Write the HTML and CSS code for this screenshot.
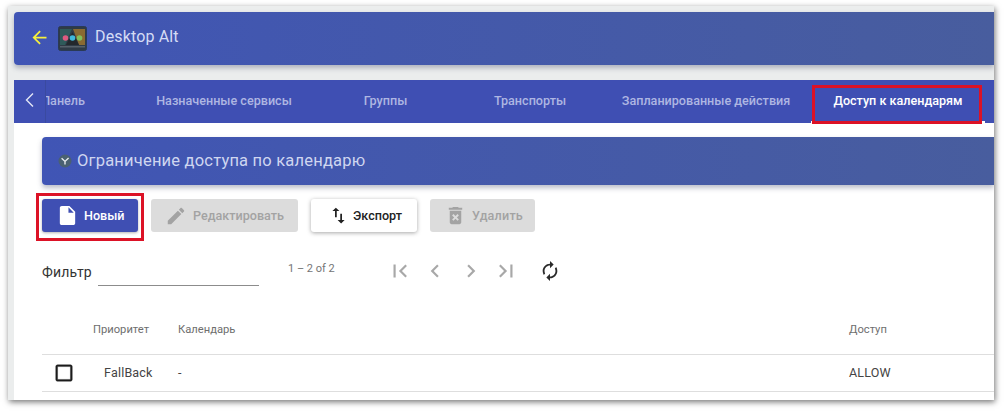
FILE: index.html
```html
<!DOCTYPE html>
<html lang="ru">
<head>
<meta charset="utf-8">
<title>Desktop Alt</title>
<link rel="stylesheet" href="styles.css">
</head>
<body>
<div class="window">
  <header class="app-bar">
    <svg class="back" viewBox="0 0 24 24"><path d="M20 11H7.83l5.59-5.59L12 4l-8 8 8 8 1.41-1.41L7.83 13H20v-2z"/></svg>
    <svg class="app-icon" viewBox="0 0 29 25">
      <rect x="0.5" y="0.5" width="28" height="24" rx="2" fill="#2f3b46" stroke="#2a3a55"/>
      <path d="M2 3h12L7 19H2z" fill="#2f5a5a"/>
      <path d="M15 3h12v16h-6z" fill="#8a6a32"/>
      <path d="M8 19l6.500-13L21 19z" fill="#23282c"/>
      <rect x="2" y="20" width="25" height="1.500" fill="#56616a"/>
      <circle cx="7.500" cy="12" r="2.800" fill="#dc5a80"/>
      <circle cx="14.500" cy="12" r="2.800" fill="#3fb9dc"/>
      <circle cx="21.500" cy="12" r="2.800" fill="#80bf5c"/>
    </svg>
    <span class="app-title">Desktop Alt</span>
  </header>

  <nav class="tabs">
    <button class="tab-pager"><svg viewBox="0 0 20 20"><path d="M13 3.500L6.500 10l6.500 6.500"/></svg></button>
    <div class="tab-list">
      <span class="tab tab-1">Панель</span>
      <span class="tab tab-2">Назначенные сервисы</span>
      <span class="tab tab-3">Группы</span>
      <span class="tab tab-4">Транспорты</span>
      <span class="tab tab-5">Запланированные действия</span>
      <span class="tab tab-6">Доступ к календарям</span>
    </div>
    <span class="mark mark-tab"></span>
  </nav>

  <main class="content">
    <div class="title-card">
      <svg class="title-icon" viewBox="0 0 14 14">
        <circle cx="7" cy="7" r="6.500" fill="#4a6172"/>
        <path d="M3.600 4.200L7 7.400l3.600-3.400M7 7.200V10.500" fill="none" stroke="#e8edf0" stroke-width="1.400"/>
      </svg>
      <span>Ограничение доступа по календарю</span>
    </div>

    <div class="actions">
      <div class="mark-host">
        <button class="btn btn-primary btn-new"><svg viewBox="0 0 24 24"><path d="M6 2c-1.100 0-1.990.9-1.990 2L4 20c0 1.100.89 2 1.990 2H18c1.100 0 2-.9 2-2V8l-6-6H6zm7 7V3.500L18.500 9H13z"/></svg>Новый</button>
        <span class="mark mark-btn"></span>
      </div>
      <button class="btn btn-disabled btn-edit"><svg viewBox="0 0 24 24"><path d="M3 17.250V21h3.750L17.810 9.940l-3.750-3.750L3 17.250zM20.710 7.040c.39-.39.39-1.020 0-1.410l-2.340-2.340c-.39-.39-1.020-.39-1.410 0l-1.830 1.830 3.750 3.750 1.830-1.830z"/></svg>Редактировать</button>
      <button class="btn btn-plain btn-export"><svg viewBox="0 0 24 24"><path d="M9 3L5 6.990h3V14h2V6.990h3L9 3zm7 14.010V10h-2v7.010h-3L15 21l4-3.990h-3z"/></svg>Экспорт</button>
      <button class="btn btn-disabled btn-delete"><svg viewBox="0 0 24 24"><path d="M6 19c0 1.100.9 2 2 2h8c1.100 0 2-.9 2-2V7H6v12zm2.460-7.120l1.410-1.410L12 12.590l2.120-2.120 1.410 1.410L13.410 14l2.120 2.120-1.410 1.410L12 15.410l-2.120 2.120-1.410-1.410L10.590 14l-2.130-2.120zM15.500 4l-1-1h-5l-1 1H5v2h14V4z"/></svg>Удалить</button>
    </div>

    <div class="filter-row">
      <label class="filter-label">Фильтр</label>
      <span class="filter-input"></span>
      <span class="range">1 – 2 of 2</span>
      <div class="pager">
        <svg viewBox="0 0 24 24"><path d="M18.410 16.590L13.820 12l4.590-4.590L17 6l-6 6 6 6zM6 6h2v12H6z"/></svg>
        <svg viewBox="0 0 24 24"><path d="M15.410 7.410L14 6l-6 6 6 6 1.410-1.410L10.830 12z"/></svg>
        <svg viewBox="0 0 24 24"><path d="M10 6L8.590 7.410 13.170 12l-4.580 4.590L10 18l6-6z"/></svg>
        <svg viewBox="0 0 24 24"><path d="M5.590 7.410L10.180 12l-4.590 4.590L7 18l6-6-6-6zM16 6h2v12h-2z"/></svg>
      </div>
      <svg class="refresh" viewBox="0 0 24 24"><path d="M12 6v3l4-4-4-4v3c-4.420 0-8 3.580-8 8 0 1.570.46 3.030 1.240 4.260L6.700 14.800c-.45-.83-.7-1.790-.7-2.800 0-3.310 2.690-6 6-6zm6.760 1.740L17.300 9.200c.44.84.7 1.790.7 2.800 0 3.310-2.690 6-6 6v-3l-4 4 4 4v-3c4.420 0 8-3.580 8-8 0-1.570-.46-3.030-1.240-4.260z"/></svg>
    </div>

    <div class="table">
      <div class="row head">
        <span></span><span>Приоритет</span><span>Календарь</span><span>Доступ</span>
      </div>
      <div class="row body-row">
        <svg class="check" viewBox="0 0 24 24"><path d="M19 5v14H5V5h14m0-2H5c-1.100 0-2 .9-2 2v14c0 1.100.9 2 2 2h14c1.100 0 2-.9 2-2V5c0-1.100-.9-2-2-2z"/></svg>
        <span class="prio">FallBack</span><span>-</span><span>ALLOW</span>
      </div>
    </div>
  </main>
</div>
</body>
</html>
```
FILE: styles.css
```css
* { box-sizing: border-box; }
html, body { margin: 0; padding: 0; height: 100%; background: #fff; overflow: hidden; }
body { font-family: Roboto, "Liberation Sans", sans-serif; }

.window {
  position: relative;
  width: 986px;
  height: 394px;
  margin: 6px 0 0 8px;
  padding: 6px 0 0 6px;
  background: #ebeded;
  box-shadow: 1px 2px 6px rgba(0,0,0,.55);
  overflow: hidden;
  display: flex;
  flex-direction: column;
}

.app-bar {
  flex: none;
  height: 53px;
  display: flex;
  align-items: center;
  background: linear-gradient(90deg, #4055b5, #485d9e);
  border-radius: 4px 0 0 4px;
  box-shadow: 0 3px 5px rgba(60,70,100,.35);
  padding: 0 0 3px 15px;
}
.back { width: 21px; height: 21px; fill: #f5f03c; }
.app-icon { width: 29px; height: 25px; margin: 2px 0 0 8px; }
.app-title { margin: 0 0 1px 8px; font-size: 16px; color: #d5dcf5; letter-spacing: .15px; }

.tabs {
  flex: none;
  position: relative;
  height: 43px;
  margin-top: 15px;
  display: flex;
  background: #3f4fb3;
}
.tab-pager {
  flex: none;
  width: 32px;
  padding: 0 0 3px 6px;
  border: 0;
  border-right: 1px solid #3a4aa0;
  background: #3f4fb3;
  display: flex;
  align-items: center;
  z-index: 1;
}
.tab-pager svg { width: 20px; height: 20px; fill: none; stroke: #e4e7f5; stroke-width: 1.4; }
.tab-list {
  flex: 1;
  min-width: 0;
  display: flex;
  overflow: hidden;
}
.tab {
  flex: none;
  display: flex;
  align-items: center;
  justify-content: center;
  font-size: 12.6px;
  font-weight: 500;
  color: #aeb6e2;
  white-space: nowrap;
  padding-bottom: 2px;
}
.tab-1 { width: 74px; justify-content: flex-end; padding-right: 35px; }
.tab-2 { width: 208px; }
.tab-3 { width: 115px; }
.tab-4 { width: 174px; }
.tab-5 { width: 194px; padding-right: 16px; }
.tab-6 { width: 174px; color: #fff; box-shadow: inset 0 -2px 0 #fff; }

.mark { position: absolute; border: 3px solid #dc1226; }
.mark-tab { left: 798px; top: 5px; width: 170px; height: 39px; }
.mark-host { position: relative; }
.mark-btn { left: -6px; top: -6px; width: 108px; height: 48px; }

.content {
  flex: 1;
  min-height: 0;
  background: #fff;
  padding: 14px 0 0 28px;
}

.title-card {
  height: 48px;
  display: flex;
  align-items: center;
  padding: 0 0 1px 16px;
  gap: 5px;
  background: linear-gradient(90deg, #4055b5, #485d9e);
  border-radius: 4px 0 0 4px;
  box-shadow: 0 3px 5px rgba(60,70,100,.35);
  font-size: 16.5px;
  color: #cfd6f0;
  letter-spacing: .2px;
}
.title-icon { width: 14px; height: 14px; }

.actions {
  display: flex;
  margin-top: 14px;
  gap: 13px;
}
.btn {
  height: 33px;
  border: 0;
  border-radius: 3px;
  padding: 0;
  display: flex;
  align-items: center;
  font: 500 12.6px Roboto, "Liberation Sans", sans-serif;
}
.btn svg { flex: none; }
.btn-new { width: 96px; padding-left: 14px; gap: 5px; background: #3f4fb3; color: #fff; box-shadow: 0 1px 3px rgba(0,0,0,.3); }
.btn-new svg { fill: #fff; width: 23px; height: 23px; }
.btn-edit { width: 147px; padding-left: 14px; gap: 6px; }
.btn-edit svg { width: 22px; height: 22px; }
.btn-export { width: 106px; padding-left: 17px; gap: 4px; }
.btn-export svg { width: 21px; height: 21px; }
.btn-delete { width: 105px; padding-left: 14px; gap: 5px; letter-spacing: .2px; }
.btn-delete svg { width: 23px; height: 23px; }
.btn-disabled { background: #dcdcdc; color: #a3a3a3; }
.btn-disabled svg { fill: #a3a3a3; }
.btn-plain { background: #fff; color: #222; box-shadow: 0 1px 4px rgba(0,0,0,.35); }
.btn-plain svg { fill: #222; }

.filter-row {
  display: flex;
  align-items: center;
  height: 53px;
  margin-top: 12px;
}
.filter-label { font-size: 14px; color: #333; width: 56px; padding-top: 3px; letter-spacing: .2px; }
.filter-input { width: 161px; height: 42px; border-bottom: 1px solid #8c8c8c; align-self: flex-start; }
.range { margin-left: 29px; width: 99px; font-size: 11px; color: #757575; margin-top: -5px; }
.pager { display: flex; gap: 9.300px; }
.pager svg { width: 26px; height: 26px; fill: #a8a8a8; }
.refresh { width: 22px; height: 22px; fill: #2a2a2a; margin-left: 20px; }

.table { margin-top: 4px; }
.row {
  display: grid;
  grid-template-columns: 51px 85px 671px 1fr;
  align-items: center;
  border-bottom: 1px solid #dedede;
}
.head { height: 54px; font-size: 11.200px; font-weight: 400; color: #6e6e6e; padding-top: 3px; }
.body-row { height: 37px; font-size: 12.500px; color: #444; letter-spacing: .2px; padding-bottom: 1px; }
.prio { padding-left: 11px; }
.check { width: 22px; height: 22px; fill: #1c1c1c; stroke: #1c1c1c; stroke-width: .4; margin-left: 11px; }
```
